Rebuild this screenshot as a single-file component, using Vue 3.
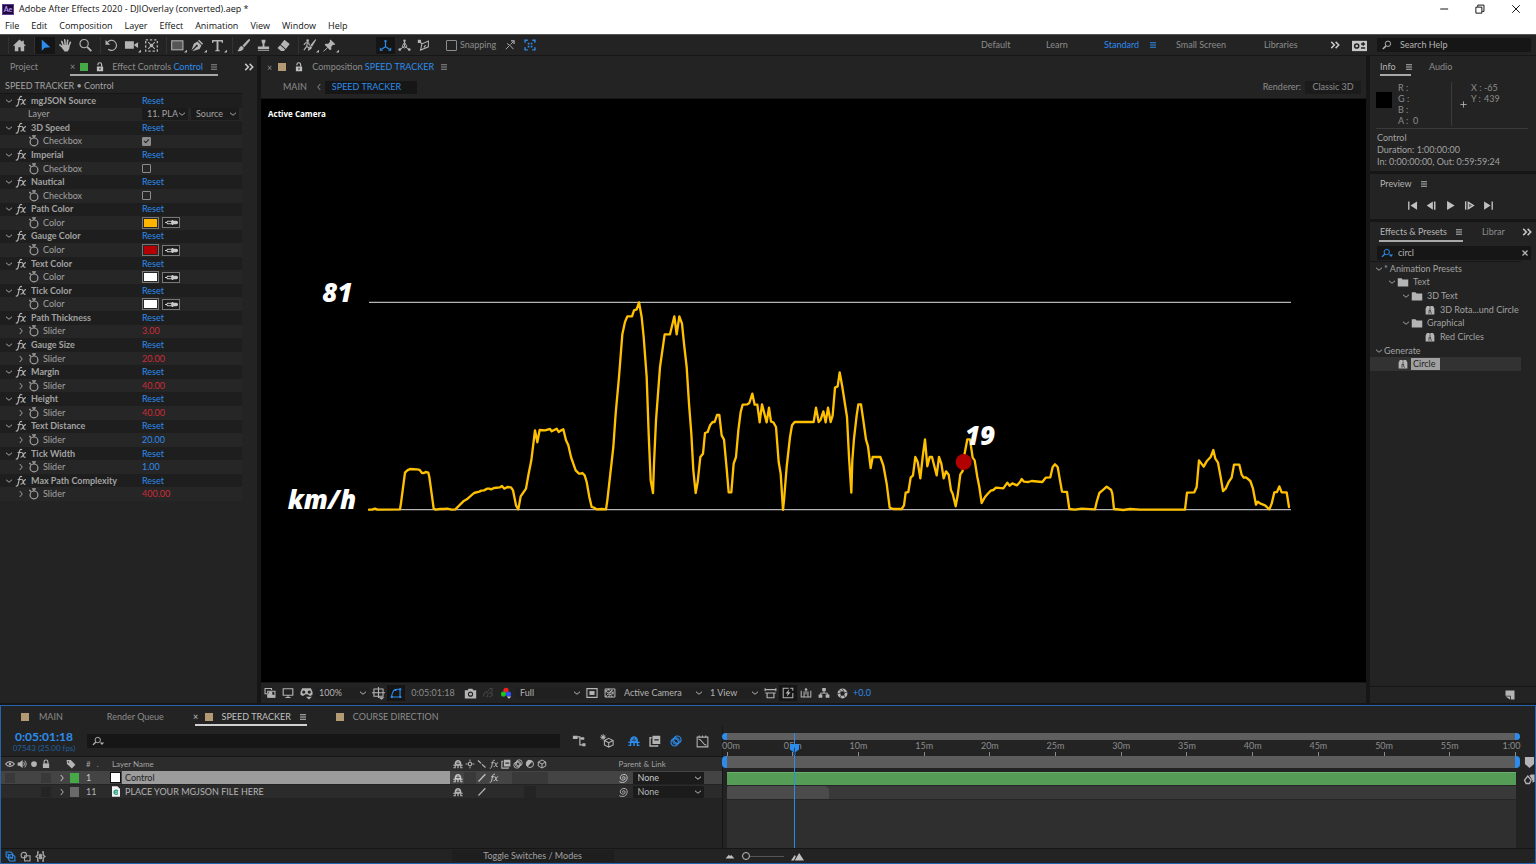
<script setup>
import { ref } from 'vue'

const menus = ['File', 'Edit', 'Composition', 'Layer', 'Effect', 'Animation', 'View', 'Window', 'Help']

const toolGroups = [
  [{ id: 'home', label: 'Home' }],
  [{ id: 'select', label: 'Selection', active: true }, { id: 'hand', label: 'Hand' }, { id: 'zoom', label: 'Zoom' }],
  [{ id: 'rotate', label: 'Rotation' }, { id: 'camera', label: 'Camera', more: true }, { id: 'panbehind', label: 'Pan Behind' }],
  [{ id: 'shape', label: 'Rectangle', more: true }, { id: 'pen', label: 'Pen', more: true }, { id: 'type', label: 'Type', more: true }],
  [{ id: 'brush', label: 'Brush' }, { id: 'stamp', label: 'Clone Stamp' }, { id: 'eraser', label: 'Eraser' }],
  [{ id: 'roto', label: 'Roto Brush', more: true }, { id: 'pin', label: 'Puppet Pin', more: true }],
]

const axisTools = [
  { id: 'axis', label: 'Local Axis', active: true },
  { id: 'axisworld', label: 'World Axis' },
  { id: 'axisview', label: 'View Axis' },
]

const effects = ref([
  { name: 'mgJSON Source', kind: 'layer', label: 'Layer' },
  { name: '3D Speed', kind: 'check', label: 'Checkbox', value: true },
  { name: 'Imperial', kind: 'check', label: 'Checkbox', value: false },
  { name: 'Nautical', kind: 'check', label: 'Checkbox', value: false },
  { name: 'Path Color', kind: 'color', label: 'Color', value: '#ffb400' },
  { name: 'Gauge Color', kind: 'color', label: 'Color', value: '#b40000' },
  { name: 'Text Color', kind: 'color', label: 'Color', value: '#ffffff' },
  { name: 'Tick Color', kind: 'color', label: 'Color', value: '#ffffff' },
  { name: 'Path Thickness', kind: 'slider', label: 'Slider', value: '3.00', expr: true },
  { name: 'Gauge Size', kind: 'slider', label: 'Slider', value: '20.00', expr: true },
  { name: 'Margin', kind: 'slider', label: 'Slider', value: '40.00', expr: true },
  { name: 'Height', kind: 'slider', label: 'Slider', value: '40.00', expr: true },
  { name: 'Text Distance', kind: 'slider', label: 'Slider', value: '20.00' },
  { name: 'Tick Width', kind: 'slider', label: 'Slider', value: '1.00' },
  { name: 'Max Path Complexity', kind: 'slider', label: 'Slider', value: '400.00', expr: true },
])

const presets = [
  { text: '* Animation Presets', depth: 0, open: true },
  { text: 'Text', depth: 1, open: true, icon: 'folder' },
  { text: '3D Text', depth: 2, open: true, icon: 'folder' },
  { text: '3D Rota...und Circle', depth: 3, icon: 'preset' },
  { text: 'Graphical', depth: 2, open: true, icon: 'folder' },
  { text: 'Red Circles', depth: 3, icon: 'preset' },
  { text: 'Generate', depth: 0, open: true },
  { text: 'Circle', depth: 1, icon: 'preset', selected: true },
]

const transport = [
  { id: 'first', label: 'First frame' },
  { id: 'prev', label: 'Previous frame' },
  { id: 'play', label: 'Play' },
  { id: 'next', label: 'Next frame' },
  { id: 'last', label: 'Last frame' },
]

const switchIcons = ['shy', 'sun', 'quality', 'fx', 'blend', 'mblur', 'adjust', 'cube']

const layers = [
  { num: '1', name: 'Control', color: '#46a846', selected: true, cells: ['shy', 'box', 'slash', 'fx', '', 'box', 'box', 'box'], avBoxes: [true, false, false, true] },
  { num: '11', name: 'PLACE YOUR MGJSON FILE HERE', color: '#6a6a6a', selected: false, cells: ['shy', '', 'slash', '', '', '', 'box', ''], avBoxes: [false, false, false, true] },
]

const ticks = ['00m', '05m', '10m', '15m', '20m', '25m', '30m', '35m', '40m', '45m', '50m', '55m', '1:00']

const search = ref('circl')
const helpSearch = ref('')
const layerSearch = ref('')

// Speed samples in canvas units, split at the midpoint of the route.
const early = '297,688 306,688 315,685 322,688 390,687 393,668 405,577 412,570 420,566 440,567 447,568 450,570 456,578 462,578 467,575 475,577 478,590 487,655 491,685 497,688 510,686 522,686 532,685 545,688 556,687 580,663 593,655 612,638 628,634 634,631 642,630 652,625 658,625 663,627 672,623 690,621 696,617 703,625 712,620 723,621 729,630 738,675 745,687 752,648 759,638 768,625 775,585 784,540 795,450 802,486 809,449 825,450 840,446 845,453 860,445 866,455 873,450 880,447 888,480 895,495 903,530 917,570 927,580 932,580 937,578 944,585 950,605 958,650 965,680 972,682 980,687 995,686 1008,687 1012,660 1030,500 1037,400 1047,290 1057,162 1065,125 1072,108 1086,108 1092,90 1100,87 1107,66 1115,110 1121,170 1130,290 1136,460 1142,600 1149,638 1152,550 1158,420 1170,260 1184,162 1200,162 1213,108 1220,162 1228,108 1236,130 1242,190 1250,260 1257,370 1264,460 1270,570 1277,638 1283,605 1291,530 1299,520 1305,458 1313,455 1320,435 1328,425 1334,425 1341,404 1348,404 1355,465 1362,478 1370,565 1376,636 1384,636 1391,550 1398,530 1405,450 1412,395 1418,373 1432,372 1438,368 1447,340 1454,373 1462,373 1469,426 1476,372 1490,426 1497,382 1503,424 1510,426 1518,440 1526,545 1532,580 1539,688'
const late = '9,448 12,420 20,320 30,230 36,195 44,185 101,185 108,142 116,185 122,178 130,153 137,186 144,142 152,185 158,165 165,82 173,78 179,36 187,80 201,170 207,290 214,397 217,300 222,235 230,165 235,132 243,132 250,180 258,238 264,258 272,323 278,290 301,290 310,315 320,370 329,442 340,446 365,446 372,435 377,397 385,395 392,352 399,345 406,290 413,305 421,354 428,290 435,237 442,318 449,290 456,290 470,345 477,290 484,310 491,354 498,333 506,343 513,390 518,400 527,438 533,405 541,342 548,332 553,285 562,237 570,237 578,292 584,300 592,350 598,380 605,428 615,410 622,402 632,391 640,389 648,382 670,384 682,367 689,376 697,369 711,375 720,365 725,356 732,364 745,365 755,362 787,365 797,352 811,351 818,320 825,312 833,320 840,360 846,394 861,395 868,446 885,448 905,445 945,447 950,425 958,398 970,388 980,379 993,388 997,400 1002,446 1030,449 1050,446 1080,448 1215,448 1221,397 1243,396 1250,380 1257,300 1271,319 1280,303 1292,290 1300,269 1306,295 1314,307 1322,350 1329,392 1337,385 1346,365 1355,352 1362,313 1378,313 1385,343 1391,352 1398,351 1411,362 1419,385 1428,433 1433,424 1442,430 1455,435 1468,447 1475,430 1483,396 1491,395 1498,378 1505,396 1520,396 1527,440'
</script>

<template>
  <div class="app">
    <svg class="defs" aria-hidden="true">
      <defs>
        <symbol id="home" viewBox="0 0 16 16"><path fill="currentColor" d="M8 1.5 1 8.2h2V14h3.8V9.8h2.4V14H13V8.2h2L12.6 6V2.8h-1.8v1.5z" /></symbol>
        <symbol id="select" viewBox="0 0 16 16"><path fill="currentColor" d="M4 1.5v12l3.2-3.1 6-.6z" /></symbol>
        <symbol id="hand" viewBox="0 0 16 16"><path fill="none" stroke="currentColor" stroke-width="1.7" stroke-linecap="round" d="M5.6 8 4 3.6M7.6 7.2 7.2 1.8M9.6 7.4l.7-5M11.4 8.6l1.8-4M5 10 2 7.4" /><path fill="currentColor" d="M4.6 7.5h7.8L12 11.6 10.2 14.4H7L4.2 10.6z" /></symbol>
        <symbol id="zoom" viewBox="0 0 16 16"><circle cx="6.5" cy="6" r="4.4" fill="none" stroke="currentColor" stroke-width="1.2" /><path stroke="currentColor" stroke-width="2" d="m9.8 9.4 4.4 4.6" /></symbol>
        <symbol id="rotate" viewBox="0 0 16 16"><path fill="none" stroke="currentColor" stroke-width="1.2" d="M3.6 4.6A5.4 5.4 0 1 1 4.5 12" /><path fill="currentColor" d="M1.6 2.2v5h5z" /></symbol>
        <symbol id="camera" viewBox="0 0 16 16"><path fill="currentColor" d="M1 3.5h9.5v8H1zM11 7l4-2.6v6.2L11 8z" /></symbol>
        <symbol id="panbehind" viewBox="0 0 16 16"><rect x="1.8" y="2" width="12.4" height="12" fill="none" stroke="currentColor" stroke-width="1.4" stroke-dasharray="2.5 2" /><circle cx="8" cy="8" r="1.8" fill="currentColor" /><path stroke="currentColor" stroke-width="1.1" d="m4.5 4.5 7 7m0-7-7 7" /></symbol>
        <symbol id="shape" viewBox="0 0 16 16"><rect x="1.8" y="3" width="12" height="9.6" fill="#555" stroke="currentColor" stroke-width="1.1" /></symbol>
        <symbol id="pen" viewBox="0 0 16 16"><path fill="currentColor" d="M9.8 1.8 14 6l-1.2 1.2-4.2-4.2zM8 3.8l4.2 4.2-2 3.8L2.5 14 7 9.5a1.2 1.2 0 1 0-1-.9L1.6 13 4 6z" /></symbol>
        <symbol id="type" viewBox="0 0 16 16"><path fill="currentColor" d="M2.2 2h11.6v3.4h-1l-.7-1.8H9v9.2l1.6.4v.8H5.4v-.8l1.6-.4V3.6H3.9l-.7 1.8h-1z" /></symbol>
        <symbol id="brush" viewBox="0 0 16 16"><path fill="currentColor" d="M14.8 1 13 1.6 7 8l1.8 1.8 6-7zM6.3 8.4l2 2C7.8 13.2 5 14.6 1.2 13.8c2.2-.8 1.8-5 5.1-5.4z" /></symbol>
        <symbol id="stamp" viewBox="0 0 16 16"><path fill="currentColor" d="M6 1.8h4v2.4L9 6v3h5v2.6H2V9h5V6L6 4.2zM2 12.6h12v1H2z" /></symbol>
        <symbol id="eraser" viewBox="0 0 16 16"><path fill="currentColor" d="m9 1.8 5.6 4.6-4 5.2L5 7zM4.4 7.6l5.4 4.6-1.3 1.6H5.4L1.6 10.6z" /></symbol>
        <symbol id="roto" viewBox="0 0 16 16"><circle cx="6" cy="2.8" r="1.4" fill="currentColor" /><path fill="none" stroke="currentColor" stroke-width="1.2" d="M2 7.2 4 5h3l1 3M5.8 5 5 9l-3 4M5 9l2.4 1.5L7 13.6" /><path fill="currentColor" d="m15.2 1.8-1-.4-5.4 6.2 1.9 1.6zM8.6 8.2l2 1.7c-.4 2.2-2 2.9-4 2.7 1.4-.8.8-3.2 2-4.4z" /></symbol>
        <symbol id="pin" viewBox="0 0 16 16"><path fill="currentColor" d="m9 1.6 5.2 5-1.4.8-1-.2-2 2.2.2 2.6-1.4 1-5.8-5.8 1.2-1.2 2.6.2 2-2.2-.4-1z" /><path stroke="currentColor" d="m6 10.2-4.4 4" /></symbol>
        <symbol id="axis" viewBox="0 0 16 16"><path fill="none" stroke="currentColor" stroke-width="1.5" d="M8 3v6.5M8 9.5 3 12.6M8 9.5l5 3.1" /><circle cx="8" cy="2.6" r="1.5" fill="currentColor" /><path fill="currentColor" d="M1 10.6v4H5zM15 10.6v4H11z" /></symbol>
        <symbol id="axisworld" viewBox="0 0 16 16"><path fill="none" stroke="currentColor" stroke-width="1.2" d="M8 2v7M8 9l-5.6 3.8M8 9l5.6 3.8M5 9.4 8 4l3 5.4-3 1.6z" /><circle cx="8" cy="2" r="1.5" fill="currentColor" /><circle cx="2.2" cy="13" r="1.7" fill="currentColor" /><circle cx="13.8" cy="13" r="1.7" fill="currentColor" /></symbol>
        <symbol id="axisview" viewBox="0 0 16 16"><path fill="none" stroke="currentColor" stroke-width="1.3" d="M3 2.6 6 6l8-3.4v7l-9.6 4L6 6M10.6 7.6l-2.2 2.8" /><path fill="currentColor" d="M1 1h4v4H1z" /></symbol>
        <symbol id="snapline" viewBox="0 0 16 16"><path fill="none" stroke="currentColor" stroke-width="1.2" d="M2.5 13.6 7 9m1.6-1.6 3.8-3.8M4 6l4.6 3 4 4.6" /><path fill="currentColor" d="M9.4 1.8h4.8v4.8h-1.6V3.4H9.4z" /></symbol>
        <symbol id="snapbox" viewBox="0 0 16 16"><path fill="none" stroke="currentColor" stroke-width="1.8" d="M1.4 5V1.6H5M11 1.6h3.6V5M14.6 11v3.4H11M5 14.4H1.4V11" /><path fill="currentColor" d="M5 5h2.2v2.2H5zM9 5h2.2v2.2H9zM5 9h2.2v2.2H5zM9 9h2.2v2.2H9z" /></symbol>
        <symbol id="menu" viewBox="0 0 16 16"><path stroke="currentColor" stroke-width="2" d="M2 3.5h12M2 8h12M2 12.5h12" /></symbol>
        <symbol id="chevrons" viewBox="0 0 16 16"><path fill="none" stroke="currentColor" stroke-width="2.4" d="m2 3 5 5-5 5M9 3l5 5-5 5" /></symbol>
        <symbol id="panels" viewBox="0 0 16 16"><path fill="currentColor" d="M0 3h16v11H0z" /><circle cx="5" cy="8.5" r="2.2" fill="none" stroke="#222" stroke-width="1.6" /><path stroke="#222" stroke-width="1.6" d="M9.6 6.5H14M9.6 10.6H14M12 4.6v3.6" /></symbol>
        <symbol id="search" viewBox="0 0 16 16"><circle cx="9.5" cy="6" r="4.3" fill="none" stroke="currentColor" stroke-width="1.5" /><path stroke="currentColor" stroke-width="2.4" d="m6.4 9.4-5 5" /></symbol>
        <symbol id="searchmenu" viewBox="0 0 20 16"><circle cx="8.8" cy="6.4" r="4.3" fill="none" stroke="currentColor" stroke-width="1.5" /><path stroke="currentColor" stroke-width="2.2" d="m5.8 9.6-4.6 4.6" /><path fill="currentColor" d="M12 10.4h7l-3.5 3.8z" /></symbol>
        <symbol id="plus" viewBox="0 0 16 16"><path stroke="currentColor" stroke-width="2" d="M8 1v14M1 8h14" /></symbol>
        <symbol id="cross" viewBox="0 0 16 16"><path stroke="currentColor" stroke-width="2.6" d="m3 3 10 10M13 3 3 13" /></symbol>
        <symbol id="lock" viewBox="0 0 16 16"><rect x="3" y="7" width="10" height="7.4" fill="currentColor" /><path fill="none" stroke="currentColor" stroke-width="1.8" d="M5 7V4.5a3 3 0 0 1 6 0V7" /></symbol>
        <symbol id="unlock" viewBox="0 0 16 16"><path fill="currentColor" fill-rule="evenodd" d="M3 7h10v7.6H3zM7.2 9v3.4h1.6V9z" /><path fill="none" stroke="currentColor" stroke-width="1.8" d="M4.6 5V4.2a3 3 0 0 1 6 0V7" /></symbol>
        <symbol id="down" viewBox="0 0 16 16"><path fill="none" stroke="currentColor" stroke-width="2" d="m2 5.5 6 5 6-5" /></symbol>
        <symbol id="right" viewBox="0 0 16 16"><path fill="none" stroke="currentColor" stroke-width="2" d="m5.5 2 5 6-5 6" /></symbol>
        <symbol id="left" viewBox="0 0 16 16"><path fill="none" stroke="currentColor" stroke-width="2" d="m10.5 2-5 6 5 6" /></symbol>
        <symbol id="fx" viewBox="0 0 16 16"><path fill="none" stroke="currentColor" stroke-width="1.5" d="M9.4 2.4C7.4 1 6.4 2.4 5.8 5L4 13c-.5 1.8-1.6 2.2-3 1.4M3.4 6h5M8.6 6c2-.4 2 1 2.6 3.6s1 3.2 2.8 2.4M14.6 6.2c-1.6-.4-2.4.8-3.6 3s-2 3.4-3.6 2.8" /></symbol>
        <symbol id="watch" viewBox="0 0 16 16"><circle cx="8" cy="9.2" r="5.2" fill="none" stroke="currentColor" stroke-width="1.6" /><path stroke="currentColor" stroke-width="1.8" d="M5.4 1.2h5.2M8 1.6v2.4M1.8 2.6l2 2" /></symbol>
        <symbol id="dropper" viewBox="0 0 20 12"><path fill="none" stroke="currentColor" stroke-width="1.4" d="M2 6h2l1.4-1.6H11v3.2H5.4L4 6" /><path fill="currentColor" d="M11 2.6h2v1.2h4.2a2.2 2.2 0 0 1 0 4.4H13v1.2h-2z" /></symbol>
        <symbol id="copies" viewBox="0 0 16 16"><path fill="none" stroke="currentColor" stroke-width="1.5" d="M10 4V2H1.4v7H4M5 5.6h9.6v8H5z" /><path fill="currentColor" d="M5 14v-3l2-5h4v4l3.6 1v3z" /></symbol>
        <symbol id="monitor" viewBox="0 0 16 16"><path fill="none" stroke="currentColor" stroke-width="1.5" d="M1.6 2.4h12.8V11H1.6zM8 11v3M4.6 14h6.8" /></symbol>
        <symbol id="goggles" viewBox="0 0 16 16"><path fill="currentColor" fill-rule="evenodd" d="M2.6 1.6h10.8L15.4 6v3.6L12.6 11 8.8 9H7.2l-3.8 2L.6 9.6V6zM4.6 4.2a2 2 0 1 0 0 4 2 2 0 0 0 0-4zm6.8 0a2 2 0 1 0 0 4 2 2 0 0 0 0-4z" /><path fill="currentColor" d="M7.4 12h7.2L11 15.4z" /></symbol>
        <symbol id="grid" viewBox="0 0 16 16"><path fill="none" stroke="currentColor" stroke-width="1.3" d="M2.4 2.4h11.2v9H2.4zM8 0v13.4M0 7h16" /><path fill="currentColor" d="M8 12.6h7.4l-3.7 3.2z" /></symbol>
        <symbol id="maskpath" viewBox="0 0 16 16"><path fill="none" stroke="currentColor" stroke-width="1.5" d="M2.4 13.4V11c1-5 4-8 7-8h4v10.4z" /><path fill="currentColor" d="M1 12h2.6v2.6H1zM12.4 12H15v2.600h-2.600zM12.400 1.600H15v2.600h-2.600zM6 2.600h2.600v2.600H6z" /></symbol>
        <symbol id="snapshot" viewBox="0 0 16 16"><path fill="currentColor" fill-rule="evenodd" d="M1 4h3.4l1.4-2h4.4l1.4 2H15v10H1zM8 5.6a3.2 3.2 0 1 0 0 6.4 3.2 3.2 0 0 0 0-6.4z" /><circle cx="8" cy="8.8" r="1.8" fill="currentColor" /></symbol>
        <symbol id="ghost" viewBox="0 0 16 16"><path fill="none" stroke="#444" stroke-width="1.4" d="M2 12.6c0-5 3-7 5-6s1 6-1.6 7M8 5l3-3h2.6v3l-3 3 3 1v2.6L9.4 13" /></symbol>
        <symbol id="rgb" viewBox="0 0 16 16"><circle cx="8" cy="4.4" r="3.4" fill="#f02020" /><circle cx="4.6" cy="9.4" r="3.4" fill="#20c020" /><circle cx="11.4" cy="9.4" r="3.4" fill="#3050ff" /><path fill="#ccc" d="M9 12.8h6l-3 2.8z" /></symbol>
        <symbol id="roi" viewBox="0 0 16 16"><path fill="none" stroke="currentColor" stroke-width="1.5" d="M1.2 2.2h13.6v11.6H1.2z" /><path fill="currentColor" d="M4.6 5.4h6.8v5.2H4.6z" /></symbol>
        <symbol id="checker" viewBox="0 0 16 16"><path fill="none" stroke="currentColor" stroke-width="1.3" d="M1.4 2.6h13.2v10.8H1.4z" /><path fill="none" stroke="currentColor" stroke-width="1.7" d="m2 7 4-4M2 13 12 3M6 13l8-8M2 4l9 9M6 3l8 8" stroke-dasharray="2.2 1.4" /></symbol>
        <symbol id="aspect" viewBox="0 0 16 16"><path fill="none" stroke="currentColor" stroke-width="1.4" d="M1 3.2h14M3.8 7.4h8.4v5.8H3.8zM1.4 1.4v3.8M14.6 1.4v3.8M3.8 7.4H1.6M12.2 7.4h2.2" /></symbol>
        <symbol id="fast" viewBox="0 0 16 16"><path fill="none" stroke="currentColor" stroke-width="1.4" d="M9 1.6H1.6v12.8h12.8V8M11 1.6h3.4V5" /><path fill="currentColor" d="M9.6 3 4.8 8.6h2.8L6.4 13l5-6H8.6z" /></symbol>
        <symbol id="tlbtn" viewBox="0 0 16 16"><path fill="none" stroke="currentColor" stroke-width="1.4" d="M1.6 5v8.4h12.8V5M5.4 6v7M10.6 6v7M8 2v8" /><path fill="currentColor" d="M5.6 4.4 8 1l2.4 3.4z" /></symbol>
        <symbol id="flow" viewBox="0 0 16 16"><path fill="currentColor" d="M5.6 1.4h4.8v4.2H5.6zM.8 10h5v4.4h-5zM10.2 10h5v4.4h-5z" /><path fill="none" stroke="currentColor" stroke-width="1.3" d="M8 5v3M3.4 10.6V8.2h9.2v2.4" /></symbol>
        <symbol id="aperture" viewBox="0 0 16 16"><circle cx="8" cy="8" r="5.2" fill="none" stroke="currentColor" stroke-width="4" /><path stroke="#222" stroke-width="1" d="m7 .6 3.4 4.8M15 6l-5.4 1.4M12.4 14.6 10 10M4 15l2.6-5M.6 8.6 6 7M3 2.2 6.8 6" /></symbol>
        <symbol id="first" viewBox="0 0 16 16"><path fill="currentColor" d="M1.6 2h2v12h-2zM14.6 2v12L5 8z" /></symbol>
        <symbol id="prev" viewBox="0 0 16 16"><path fill="currentColor" d="M10 2v12L1 8zM11.6 2h2.2v12h-2.2z" /></symbol>
        <symbol id="play" viewBox="0 0 16 16"><path fill="currentColor" d="m3 1.6 11 6.4-11 6.4z" /></symbol>
        <symbol id="next" viewBox="0 0 16 16"><path fill="currentColor" d="M1.4 2h2v12h-2z" /><path fill="#666" stroke="currentColor" stroke-width="2" d="m6.2 3.4 7.4 4.6-7.4 4.6z" /></symbol>
        <symbol id="last" viewBox="0 0 16 16"><path fill="currentColor" d="M1.6 2v12L11 8zM12.4 2h2v12h-2z" /></symbol>
        <symbol id="folder" viewBox="0 0 16 12"><path fill="currentColor" d="M1 1h5l1.4 1.6H15V12H1z" /></symbol>
        <symbol id="preset" viewBox="0 0 16 16"><path fill="currentColor" d="M1 5.4 3 1.6h4L8 4l1-2.4h4L15 5.4V15H1z" /><path fill="none" stroke="#333" stroke-width="1.3" d="M8 4.4v3M6.4 14V8.6h3.2M10.4 14l-2-5" /></symbol>
        <symbol id="newitem" viewBox="0 0 16 16"><path fill="currentColor" d="M2 2h12v12H9V9H2z" /><path fill="currentColor" d="M2 10h6v4z" /></symbol>
        <symbol id="eye" viewBox="0 0 16 16"><path fill="none" stroke="currentColor" stroke-width="1.8" d="M1 8c3.6-5 10.4-5 14 0-3.6 5-10.4 5-14 0z" /><circle cx="8" cy="8" r="2" fill="currentColor" /></symbol>
        <symbol id="speaker" viewBox="0 0 16 16"><path fill="currentColor" d="M1 5.4h3L9 1.6v12.8L4 10.6H1z" /><path fill="none" stroke="currentColor" stroke-width="1.5" d="M10.6 5c1.6 2 1.6 4 0 6M12.4 2.6c3 3.6 3 7.2 0 10.8" /></symbol>
        <symbol id="solo" viewBox="0 0 16 16"><circle cx="8" cy="8" r="4.6" fill="currentColor" /></symbol>
        <symbol id="tag" viewBox="0 0 16 16"><path fill="currentColor" fill-rule="evenodd" d="M1 1.6h6.6L15 9l-5.6 6L1.6 8zM4 3.6a1.2 1.2 0 1 0 0 2.4 1.2 1.2 0 0 0 0-2.4z" /></symbol>
        <symbol id="shy" viewBox="0 0 16 16"><path fill="currentColor" d="M2.6 8c0-8.4 10.8-8.4 10.8 0v1h2.2v1.6h-2.2V13h2v1.6h-3.8v-4H9v4H7v-4H4.4v4H.6V13h2v-2.4H.4V9h2.2z" /><path stroke="#333" stroke-width="1.1" d="M8 3.4v5M5 7h6" /></symbol>
        <symbol id="sun" viewBox="0 0 16 16"><circle cx="8" cy="8" r="2.8" fill="none" stroke="currentColor" stroke-width="1.7" /><path stroke="currentColor" stroke-width="1.6" d="M8 1v3M8 12v3M1 8h3M12 8h3" /></symbol>
        <symbol id="quality" viewBox="0 0 16 16"><path stroke="currentColor" stroke-width="2" d="m1.6 2.4 5 4.6M8 8.6l5.6 5" /></symbol>
        <symbol id="slash" viewBox="0 0 16 16"><path stroke="currentColor" stroke-width="1.8" d="m2.4 13.6 11-11.6" /></symbol>
        <symbol id="blend" viewBox="0 0 16 16"><path fill="currentColor" fill-rule="evenodd" d="M4.6 1H15v11H4.6zM7 5.6v1.8h6V5.6z" /><path fill="none" stroke="currentColor" stroke-width="1.8" d="M3.6 3.6H1.4v11h10v-1.4" /></symbol>
        <symbol id="mblur" viewBox="0 0 16 16"><circle cx="9.8" cy="6.2" r="4.9" fill="none" stroke="currentColor" stroke-width="1.5" /><circle cx="6.2" cy="9.8" r="4.9" fill="none" stroke="currentColor" stroke-width="1.5" /><circle cx="8" cy="8" r="4.4" fill="none" stroke="currentColor" stroke-width="1.3" /></symbol>
        <symbol id="adjust" viewBox="0 0 16 16"><circle cx="8" cy="8" r="5.6" fill="none" stroke="currentColor" stroke-width="1.6" /><path fill="currentColor" d="M12.2 3.8A6 6 0 1 0 3.8 12.2z" /></symbol>
        <symbol id="cube" viewBox="0 0 16 16"><path fill="none" stroke="currentColor" stroke-width="1.6" d="m8 1.6 6 3.2v6.4L8 14.4l-6-3.2V4.8zM2 4.8 8 8l6-3.2M8 8v6.4" /></symbol>
        <symbol id="spiral" viewBox="0 0 16 16"><path fill="none" stroke="currentColor" stroke-width="1.5" d="M8.6 8.4c-1 .8-2-.4-1.4-1.6 1-1.8 4-1.2 4.2 1.2.2 3-3.4 4.4-5.8 3S3 6 5 4s6.4-2.4 8.4-.4 1.6 7-1 9.6-7.4 2.4-10.4.6" /></symbol>
        <symbol id="miniflow" viewBox="0 0 16 16"><path fill="currentColor" d="M1 2h5.4v3.6H1zM10 3.6h4v3h-4zM11.8 10.6h3.6V14h-3.6z" /><path fill="none" stroke="currentColor" stroke-width="1.4" d="M6 3.4h3v1.7h2M9 5v7.4h3.2" /></symbol>
        <symbol id="draft3d" viewBox="0 0 16 16"><path fill="none" stroke="currentColor" stroke-width="1.2" d="m10 5 5 2.4v5L10 15l-5-2.6v-5zM5 7.4 10 10l5-2.6M10 10v5" /><circle cx="3.6" cy="3.6" r="1.8" fill="currentColor" /><path stroke="currentColor" stroke-width=".9" d="M3.6 0v7.2M0 3.6h7.2M1 1l5.2 5.2M6.2 1 1 6.2" /></symbol>
        <symbol id="graph" viewBox="0 0 16 16"><path fill="none" stroke="currentColor" stroke-width="1.3" d="M1.4 2.6h13.2v12H1.4zM3 5c5 0 4 7 10 7.6M4 .6v2M8 .6v2M12 .6v2" /></symbol>
        <symbol id="jsonfile" viewBox="0 0 12 16"><path fill="#f2f2f2" d="M0 0h8l4 4v12H0z" /><path fill="none" stroke="#22a07c" stroke-width="1.8" d="M9 7.4C6.6 5 3 6.2 3 9s3.4 4.4 6 2M3.4 9H9" /></symbol>
        <symbol id="togglea" viewBox="0 0 16 16"><path fill="none" stroke="currentColor" stroke-width="1.5" d="M1.6 1.6h7L11 4v6H4l-2.4-2.4zM5 5.6h6.6L14.4 8v6.4H7L5 12z" /><path fill="none" stroke="currentColor" stroke-width="1.3" d="m3 3.6 8 8" /></symbol>
        <symbol id="toggleb" viewBox="0 0 16 16"><circle cx="5.6" cy="6" r="4" fill="none" stroke="currentColor" stroke-width="1.6" /><rect x="6.6" y="7" width="8" height="7.4" fill="none" stroke="currentColor" stroke-width="1.6" /></symbol>
        <symbol id="togglec" viewBox="0 0 16 16"><path fill="none" stroke="currentColor" stroke-width="2" d="M5.6 1.4H4V6L1.6 8 4 10v4.6h1.6M10.4 1.4H12V6l2.4 2-2.4 2v4.6h-1.6" /><path fill="currentColor" d="M5.6 5.6 7 4h2l1.4 1.6v5L9 12H7l-1.4-1.4z" /></symbol>
        <symbol id="hill" viewBox="0 0 16 16"><path fill="currentColor" d="m1 12 5-6 2 2 2-1.6L15 12z" /></symbol>
        <symbol id="hills" viewBox="0 0 16 16"><path fill="currentColor" d="m0 13 4.6-7L6 7.6 3.6 13zM4.6 13 10 3.6 16 13z" /></symbol>
        <symbol id="marker" viewBox="0 0 12 14"><path fill="currentColor" d="M1 1h10v7.6L6 13 1 8.6z" /></symbol>
        <symbol id="compbtn" viewBox="0 0 16 16"><path fill="none" stroke="currentColor" stroke-width="1.8" d="M2 9.600 6.400 4l4.400 5.600L8.600 14H4.200z" /><path fill="currentColor" d="M8.600 3.400 11 2h4.400v9.600L12.600 13V9.600z" /></symbol>
        <symbol id="minimize" viewBox="0 0 16 16"><path stroke="#111" stroke-width="1.3" d="M3 8h10.5" /></symbol>
        <symbol id="restore" viewBox="0 0 16 16"><path fill="none" stroke="#111" stroke-width="1.3" d="M2.5 5.5h8v8h-8zM5 5V2.8h8.3v8.4H11" /></symbol>
        <symbol id="close" viewBox="0 0 16 16"><path stroke="#111" stroke-width="1.3" d="m3 3 10 10M13 3 3 13" /></symbol>
      </defs>
    </svg>

    <header class="titlebar">
      <span class="logo">Ae</span>
      <span class="title">Adobe After Effects 2020 - DJIOverlay (converted).aep *</span>
      <div class="winbtns">
        <button v-for="b in ['minimize', 'restore', 'close']" :key="b" :aria-label="b"><svg class="i12"><use :href="'#' + b" /></svg></button>
      </div>
    </header>

    <nav class="menubar">
      <button v-for="m in menus" :key="m">{{ m }}</button>
    </nav>

    <div class="toolbar">
      <div v-for="(g, gi) in toolGroups" :key="gi" class="toolgroup">
        <button v-for="t in g" :key="t.id" class="tool" :class="{ active: t.active, more: t.more }" :aria-label="t.label">
          <svg class="i15"><use :href="'#' + t.id" /></svg>
        </button>
      </div>
      <div class="toolgroup axes">
        <button v-for="t in axisTools" :key="t.id" class="tool" :class="{ active: t.active }" :aria-label="t.label">
          <svg class="i13"><use :href="'#' + t.id" /></svg>
        </button>
      </div>
      <label class="snapping"><input type="checkbox" class="check big" />Snapping</label>
      <button class="tool" aria-label="Snap edges"><svg class="i12"><use href="#snapline" /></svg></button>
      <button class="tool blue" aria-label="Snap bounds"><svg class="i12"><use href="#snapbox" /></svg></button>
      <div class="workspaces">
        <button class="ws1">Default</button>
        <button class="ws2">Learn</button>
        <button class="ws3 on">Standard<svg class="i8"><use href="#menu" /></svg></button>
        <button class="ws4">Small Screen</button>
        <button class="ws5">Libraries</button>
        <button class="more-ws" aria-label="More workspaces"><svg class="i10"><use href="#chevrons" /></svg></button>
        <button class="panels" aria-label="Panels"><svg class="i15"><use href="#panels" /></svg></button>
        <label class="helpbox"><svg class="i10"><use href="#search" /></svg><input v-model="helpSearch" type="text" placeholder="Search Help" aria-label="Search Help" /></label>
      </div>
    </div>

    <main class="workspace">
      <section class="panel controls">
        <div class="tabs">
          <button class="tab project">Project</button>
          <div class="tab current">
            <button class="x" aria-label="Close tab">×</button>
            <i class="chip green"></i>
            <svg class="i10"><use href="#unlock" /></svg>
            <span>Effect Controls <b>Control</b></span>
            <svg class="i8"><use href="#menu" /></svg>
          </div>
          <button class="end" aria-label="More tabs"><svg class="i10"><use href="#chevrons" /></svg></button>
        </div>
        <div class="path">SPEED TRACKER • Control</div>
        <div class="fxlist">
          <template v-for="(e, i) in effects" :key="e.name">
            <div class="fxrow head">
              <svg class="i8"><use href="#down" /></svg>
              <svg class="i12 fxi"><use href="#fx" /></svg>
              <span class="fxname">{{ e.name }}</span>
              <button class="value blue">Reset</button>
            </div>
            <div class="fxrow prop" :class="'is-' + e.kind">
              <svg v-if="e.kind === 'slider'" class="i8 tw"><use href="#right" /></svg>
              <svg v-if="e.kind !== 'layer'" class="i12 watch"><use href="#watch" /></svg>
              <label class="fxname" :for="'fx' + i">{{ e.label }}</label>
              <div class="value">
                <template v-if="e.kind === 'layer'">
                  <span class="dd w1"><select :id="'fx' + i"><option>11. PLACE YOUR MGJSON FILE HERE</option></select><svg class="i8"><use href="#down" /></svg></span>
                  <span class="dd w2"><select aria-label="Layer source"><option>Source</option></select><svg class="i8"><use href="#down" /></svg></span>
                </template>
                <input v-else-if="e.kind === 'check'" :id="'fx' + i" v-model="e.value" type="checkbox" class="check" />
                <template v-else-if="e.kind === 'color'">
                  <input :id="'fx' + i" v-model="e.value" type="color" class="swatch" />
                  <button class="dropper" aria-label="Pick color"><svg><use href="#dropper" /></svg></button>
                </template>
                <input v-else :id="'fx' + i" v-model="e.value" type="text" class="num" :class="{ expr: e.expr }" />
              </div>
            </div>
          </template>
        </div>
      </section>

      <section class="panel comp">
        <div class="tabs">
          <div class="tab">
            <button class="x" aria-label="Close tab">×</button>
            <i class="chip tan"></i>
            <svg class="i10"><use href="#unlock" /></svg>
            <span>Composition <b>SPEED TRACKER</b></span>
            <svg class="i8"><use href="#menu" /></svg>
          </div>
        </div>
        <div class="crumbs">
          <button class="crumb">MAIN</button>
          <svg class="i8"><use href="#left" /></svg>
          <button class="crumb here">SPEED TRACKER</button>
          <span class="renderer">Renderer:</span>
          <button class="classic">Classic 3D</button>
        </div>
        <div class="viewer">
          <svg class="canvas" viewBox="0 0 3315 1749" preserveAspectRatio="xMidYMid meet">
            <text class="camlabel" x="21" y="54">Active Camera</text>
            <path d="M324 610H3090M324 1232H3090" stroke="#b4b4b4" stroke-width="4" />
            <polyline class="speed" transform="translate(27 544)" :points="early" />
            <polyline class="speed" transform="translate(1557 784)" :points="late" />
            <circle cx="2108" cy="1089" r="24" fill="#b00000" />
            <text class="big" x="184" y="610">81</text>
            <text class="big" x="80" y="1231">km/h</text>
            <text class="big" x="2112" y="1039">19</text>
          </svg>
        </div>
        <div class="viewbar">
          <button aria-label="Always preview"><svg class="i12"><use href="#copies" /></svg></button>
          <button aria-label="Primary viewer"><svg class="i12"><use href="#monitor" /></svg></button>
          <button aria-label="VR"><svg class="i13"><use href="#goggles" /></svg></button>
          <span class="dd z1"><select aria-label="Magnification"><option>100%</option></select><svg class="i8"><use href="#down" /></svg></span>
          <button aria-label="Grid"><svg class="i13"><use href="#grid" /></svg></button>
          <button class="on" aria-label="Mask visibility"><svg class="i12"><use href="#maskpath" /></svg></button>
          <button class="vtime">0:05:01:18</button>
          <button aria-label="Snapshot"><svg class="i13"><use href="#snapshot" /></svg></button>
          <button aria-label="Show snapshot"><svg class="i12"><use href="#ghost" /></svg></button>
          <button aria-label="Channels"><svg class="i12"><use href="#rgb" /></svg></button>
          <span class="dd z2"><select aria-label="Resolution"><option>Full</option></select><svg class="i8"><use href="#down" /></svg></span>
          <button aria-label="Region of interest"><svg class="i12"><use href="#roi" /></svg></button>
          <button aria-label="Transparency grid"><svg class="i12"><use href="#checker" /></svg></button>
          <span class="dd z3"><select aria-label="3D view"><option>Active Camera</option></select><svg class="i8"><use href="#down" /></svg></span>
          <span class="dd z4"><select aria-label="View layout"><option>1 View</option></select><svg class="i8"><use href="#down" /></svg></span>
          <button aria-label="Pixel aspect"><svg class="i13"><use href="#aspect" /></svg></button>
          <button class="dark" aria-label="Fast previews"><svg class="i12"><use href="#fast" /></svg></button>
          <button aria-label="Timeline"><svg class="i12"><use href="#tlbtn" /></svg></button>
          <button aria-label="Flowchart"><svg class="i12"><use href="#flow" /></svg></button>
          <button aria-label="Exposure"><svg class="i11"><use href="#aperture" /></svg></button>
          <button class="exposure">+0.0</button>
        </div>
      </section>

      <aside class="side">
        <section class="panel info">
          <div class="tabs">
            <div class="tab current"><span>Info</span><svg class="i8"><use href="#menu" /></svg></div>
            <button class="tab audio">Audio</button>
          </div>
          <div class="readout">
            <i class="black"></i>
            <dl class="rgba"><dt>R :</dt><dd></dd><dt>G :</dt><dd></dd><dt>B :</dt><dd></dd><dt>A :</dt><dd>0</dd></dl>
            <svg class="plus"><use href="#plus" /></svg>
            <dl class="xy"><dt>X :</dt><dd>-65</dd><dt>Y :</dt><dd>439</dd></dl>
          </div>
          <div class="details">
            <p>Control</p>
            <p>Duration: 1:00:00:00</p>
            <p>In: 0:00:00:00, Out: 0:59:59:24</p>
          </div>
        </section>
        <section class="panel preview">
          <div class="ptitle">Preview<svg class="i8"><use href="#menu" /></svg></div>
          <div class="transport">
            <button v-for="t in transport" :key="t.id" :aria-label="t.label"><svg class="i11"><use :href="'#' + t.id" /></svg></button>
          </div>
        </section>
        <section class="panel presets">
          <div class="tabs">
            <div class="tab current"><span>Effects &amp; Presets</span><svg class="i8"><use href="#menu" /></svg></div>
            <button class="tab libs">Librar</button>
            <button class="end" aria-label="More tabs"><svg class="i10"><use href="#chevrons" /></svg></button>
          </div>
          <div class="presetsearch">
            <svg class="sm"><use href="#searchmenu" /></svg>
            <input v-model="search" type="text" aria-label="Search presets" />
            <button aria-label="Clear"><svg class="i8"><use href="#cross" /></svg></button>
          </div>
          <ul class="tree">
            <li v-for="p in presets" :key="p.text" :class="['d' + p.depth, { selected: p.selected }]">
              <svg class="i8" :class="{ hid: !p.open }"><use href="#down" /></svg>
              <svg v-if="p.icon" class="ti"><use :href="'#' + p.icon" /></svg>
              <span>{{ p.text }}</span>
            </li>
          </ul>
          <div class="sidefoot"><button aria-label="New preset"><svg class="i12"><use href="#newitem" /></svg></button></div>
        </section>
      </aside>
    </main>

    <section class="timeline">
      <div class="tltabs">
        <button class="tltab t1"><i class="chip tan"></i>MAIN</button>
        <button class="tltab t2">Render Queue</button>
        <div class="tltab t3"><button class="x" aria-label="Close tab">×</button><i class="chip tan"></i><span>SPEED TRACKER</span><svg class="i8"><use href="#menu" /></svg></div>
        <button class="tltab t4"><i class="chip tan"></i>COURSE DIRECTION</button>
      </div>
      <div class="tlbody">
        <div class="tlleft">
          <div class="tltop">
            <div class="clock"><b>0:05:01:18</b><span>07543 (25.00 fps)</span></div>
            <label class="layersearch"><svg class="sm"><use href="#searchmenu" /></svg><input v-model="layerSearch" type="text" aria-label="Search layers" /></label>
            <div class="tlicons">
              <button aria-label="Mini flowchart"><svg class="i14"><use href="#miniflow" /></svg></button>
              <button class="apart" aria-label="Draft 3D"><svg class="i14"><use href="#draft3d" /></svg></button>
              <button class="apart blue" aria-label="Shy layers"><svg class="i12"><use href="#shy" /></svg></button>
              <button aria-label="Frame blending"><svg class="i12"><use href="#blend" /></svg></button>
              <button class="blue" aria-label="Motion blur"><svg class="i12"><use href="#mblur" /></svg></button>
              <button class="apart" aria-label="Graph editor"><svg class="i13"><use href="#graph" /></svg></button>
            </div>
          </div>
          <div class="lrow lhead">
            <div class="av">
              <svg v-for="a in ['eye', 'speaker', 'solo', 'lock']" :key="a" class="i10"><use :href="'#' + a" /></svg>
            </div>
            <div class="tagcol"><svg class="i10"><use href="#tag" /></svg></div>
            <div class="numcol"># &nbsp; .</div>
            <div class="namecol">Layer Name</div>
            <div class="switches"><span v-for="s in switchIcons" :key="s"><svg class="i10"><use :href="'#' + s" /></svg></span></div>
            <div class="parent">Parent &amp; Link</div>
          </div>
          <div v-for="l in layers" :key="l.num" class="lrow layer" :class="{ selected: l.selected }">
            <div class="av"><i v-for="(b, bi) in l.avBoxes" :key="bi" :class="{ box: b }"></i></div>
            <div class="tagcol"><svg class="i8"><use href="#right" /></svg><i class="lchip" :style="{ background: l.color }"></i></div>
            <div class="numcol">{{ l.num }}</div>
            <div class="namecol">
              <i v-if="l.selected" class="null"></i>
              <svg v-else class="file"><use href="#jsonfile" /></svg>
              <span>{{ l.name }}</span>
            </div>
            <div class="switches">
              <span v-for="(c, ci) in l.cells" :key="ci" :class="{ box: c === 'box' }"><svg v-if="c && c !== 'box'" class="i10"><use :href="'#' + c" /></svg></span>
            </div>
            <div class="parent">
              <svg class="i10"><use href="#spiral" /></svg>
              <span class="dd"><select :aria-label="'Parent of ' + l.name"><option>None</option></select><svg class="i8"><use href="#down" /></svg></span>
            </div>
          </div>
        </div>
        <div class="tlright">
          <div class="tracks">
            <div class="navbar"></div>
            <ol class="ruler"><li v-for="t in ticks" :key="t"><span>{{ t }}</span></li></ol>
            <div class="workarea"></div>
            <div class="track one"><div class="clip"></div></div>
            <div class="track two"><div class="clip"></div></div>
            <div class="empty"></div>
            <div class="playhead"><svg viewBox="0 0 10 12"><path fill="#2d8ceb" d="M0 0h10v6L6 9v3H4V9L0 6z" /><path fill="#154a80" d="M4.400 4h1.200v8H4.400z" /></svg></div>
          </div>
          <div class="edge">
            <svg class="mk"><use href="#marker" /></svg>
            <svg class="i12"><use href="#compbtn" /></svg>
          </div>
        </div>
      </div>
      <footer class="tlfoot">
        <div class="footleft">
          <button class="blue" aria-label="Layer switches pane"><svg class="i11"><use href="#togglea" /></svg></button>
          <button aria-label="Transfer controls pane"><svg class="i11"><use href="#toggleb" /></svg></button>
          <button aria-label="In out pane"><svg class="i11"><use href="#togglec" /></svg></button>
          <button class="toggle">Toggle Switches / Modes</button>
        </div>
        <div class="footright">
          <svg class="i10"><use href="#hill" /></svg>
          <input type="range" min="0" max="100" value="0" aria-label="Timeline zoom" />
          <svg class="i13"><use href="#hills" /></svg>
        </div>
      </footer>
    </section>
  </div>
</template>

<style>
body { background: #161616; }
</style>

<style scoped>
* { box-sizing: border-box; }
.app { min-height: 100vh; display: flex; flex-direction: column; background: #161616; color: #a2a2a2; font: 9px/12px Lato, "Open Sans", sans-serif; overflow: hidden; }
.defs { display: block; width: 0; height: 0; }
button, input, select { font: inherit; color: inherit; background: none; border: 0; padding: 0; margin: 0; outline: none; appearance: none; min-width: 0; }
button { display: flex; align-items: center; justify-content: center; white-space: nowrap; }
svg { flex: none; display: block; }
p, ul, ol, dl, dd { margin: 0; padding: 0; list-style: none; }
.i8 { width: 8px; height: 8px; }
.i10 { width: 10px; height: 10px; }
.i11 { width: 11px; height: 11px; }
.i12 { width: 12px; height: 12px; }
.i13 { width: 13px; height: 13px; }
.i14 { width: 14px; height: 14px; }
.i15 { width: 15px; height: 15px; }
.blue { color: #2d8ceb; }
.chip { width: 8px; height: 8px; flex: none; }
.green { background: #46a846; }
.tan { background: #b39a74; }
.x { font-size: 9px; line-height: 9px; }

.titlebar { height: 18px; background: #fff; color: #111; display: flex; align-items: center; padding-left: 2px; gap: 5px; font: 9px/12px "Open Sans", sans-serif; }
.logo { width: 12px; height: 11px; background: #1f0740; border: 1px solid #5c3d8c; color: #b49ae8; font: bold 7px/8px Lato, sans-serif; text-align: center; }
.winbtns { margin-left: auto; display: flex; padding-right: 2px; }
.winbtns button { width: 36px; height: 16px; }
.menubar { height: 16px; background: #fff; color: #111; display: flex; align-items: center; gap: 12px; padding-left: 5px; font: 9px/12px "Open Sans", sans-serif; }

.toolbar { height: 22px; background: #232323; border-top: 1px solid #555; border-bottom: 1px solid #161616; display: flex; align-items: center; padding-left: 8px; color: #b4b4b4; }
.toolgroup { display: flex; margin-right: 5px; border-left: 1px solid #323232; }
.tool { width: 20px; height: 17px; position: relative; }
.tool.active { background: #151515; color: #2d8ceb; }
.tool.more::after { content: ""; position: absolute; right: 0; bottom: 1px; width: 3px; height: 3px; background: currentColor; clip-path: polygon(100% 0, 100% 100%, 0 100%); }
.axes { margin-left: 32px; border: 0; }
.axes .tool { width: 19px; }
.snapping { display: flex; align-items: center; gap: 3px; margin: 0 4px 0 8px; color: #8c8c8c; }
.check { width: 9px; height: 9px; border: 1px solid #8c8c8c; border-radius: 1px; display: block; }
.check.big { width: 11px; height: 11px; }
.check:checked { background: #8c8c8c; position: relative; }
.check:checked::after { content: ""; position: absolute; left: 2px; top: 0; width: 2px; height: 4px; border: solid #222; border-width: 0 1px 1px 0; transform: rotate(45deg); }
.workspaces { margin-left: auto; display: flex; align-items: center; color: #8c8c8c; padding-right: 5px; height: 100%; }
.workspaces > button { justify-content: flex-start; }
.ws1 { width: 65px; } .ws2 { width: 58px; } .ws3 { width: 72px; gap: 10px; } .ws4 { width: 88px; } .ws5 { width: 66px; }
.ws3.on { color: #2d8ceb; }
.more-ws { width: 22px; color: #c8c8c8; }
.panels { width: 25px; color: #c8c8c8; }
.helpbox { width: 154px; height: 14px; background: #161616; display: flex; align-items: center; gap: 8px; padding-left: 5px; color: #b4b4b4; }
.helpbox input::placeholder { color: #b4b4b4; opacity: 1; }

.workspace { flex: 1; min-height: 0; display: grid; grid-template-columns: 257px minmax(0, 1fr) 166px; gap: 0 4px; padding-bottom: 2px; }
.panel { background: #232323; min-width: 0; }
.tabs { display: flex; height: 20px; color: #8c8c8c; }
.tab { display: flex; align-items: center; height: 20px; padding-top: 2px; white-space: nowrap; }
.tab.current { border-bottom: 2px solid #a8a8a8; color: #b4b4b4; padding-top: 3px; }
.tab b { font-weight: 400; color: #2d8ceb; }
.end { margin-left: auto; color: #c8c8c8; padding-top: 2px; }
.project { width: 60px; margin-left: 10px; justify-content: flex-start; }
.controls .current { gap: 5px; width: 148px; color: #8c8c8c; }
.controls .current .i8 { margin-left: auto; }
.controls .end { padding-right: 3px; }
.controls .current .i10, .comp .tab .i10 { margin: 0 2px; color: #c0c0c0; }
.path { height: 17px; padding: 4px 5px 0; }
.fxlist { height: 408px; display: grid; grid-auto-rows: 1fr; width: 242px; border-top: 1px solid #161616; }
.fxrow { display: flex; align-items: center; min-width: 0; padding-left: 5px; }
.fxrow.head { background: #1e1e1e; }
.fxrow.prop { background: #262626; }
.fxi { margin: 0 4px 0 2px; color: #b4b4b4; }
.head .fxname { flex: 1; font-weight: 700; color: #a2a2a2; }
.value { width: 100px; flex: none; justify-content: flex-start; display: flex; align-items: center; gap: 3px; }
.prop .fxname { flex: 1; }
.is-layer, .is-check, .is-color { padding-left: 28px; }
.is-slider { padding-left: 17px; }
.tw { margin-right: 3px; }
.watch { margin-right: 3px; }
.dd { position: relative; display: flex; align-items: center; background: #1b1b1b; height: 12px; }
.dd select { width: 100%; padding: 0 10px 0 5px; height: 12px; line-height: 12px; overflow: hidden; text-overflow: clip; }
.dd svg { position: absolute; right: 2px; top: 2px; pointer-events: none; }
.w1 { width: 46px; }
.w2 { width: 48px; }
.swatch { width: 17px; height: 12px; border: 1px solid #777; }
.swatch::-webkit-color-swatch-wrapper { padding: 1px; }
.swatch::-webkit-color-swatch { border: 0; }
.dropper { width: 18px; height: 11px; border: 1px solid #777; color: #c8c8c8; background: #1b1b1b; }
.dropper svg { width: 16px; height: 9px; }
.num { width: 60px; color: #2d8ceb; height: 12px; }
.num.expr { color: #cc2c38; }

.comp { display: flex; flex-direction: column; }
.comp .tab { gap: 6px; padding-left: 6px; }
.crumbs { height: 22px; display: flex; align-items: center; color: #8c8c8c; }
.crumb { margin: 0 8px 0 22px; }
.crumb.here { margin: 0 0 0 2px; width: 92px; height: 13px; background: #161616; color: #2d8ceb; justify-content: flex-start; padding-left: 7px; }
.renderer { margin-left: auto; }
.classic { width: 56px; height: 13px; background: #1b1b1b; margin: 0 5px 0 4px; }
.viewer { flex: 1; min-height: 0; background: #000; border-top: 1px solid #161616; }
.canvas { width: 100%; height: 100%; }
.speed { fill: none; stroke: #ffc000; stroke-width: 7; stroke-linejoin: round; stroke-linecap: round; }
.camlabel { font: 700 24px "Open Sans", sans-serif; fill: #fff; }
.big { font: italic 800 78px "Open Sans", sans-serif; fill: #fff; }
.viewbar { height: 21px; display: flex; align-items: center; border-top: 1px solid #161616; color: #b4b4b4; }
.viewbar > button { width: 18px; height: 16px; }
.viewbar > button.on { background: #151515; color: #2d8ceb; }
.viewbar > button.dark { background: #151515; }
.viewbar > button.vtime { width: 56px; color: #8c8c8c; }
.viewbar > button.exposure { width: 22px; color: #2d8ceb; }
.viewbar .dd { background: #202020; }
.z1 { width: 54px; } .z2 { width: 68px; } .z3 { width: 86px; } .z4 { width: 56px; }
.z1 select { padding-left: 4px; }

.side { display: flex; flex-direction: column; gap: 3px; min-width: 0; }
.info { height: 115px; }
.info .current { margin-left: 10px; gap: 9px; width: 31px; }
.info .audio { margin-left: 18px; }
.readout { height: 53px; margin: 0 8px 0 6px; border-bottom: 1px solid #3a3a3a; display: flex; padding-top: 6px; color: #8c8c8c; line-height: 11px; }
.black { width: 16px; height: 16px; background: #000; margin-top: 10px; }
.rgba { display: grid; grid-template-columns: 15px 1fr; grid-auto-rows: 11px; margin-left: 6px; width: 54px; border-right: 1px solid #3a3a3a; height: 44px; }
.plus { margin: 19px 4px 0 8px; width: 7px; height: 7px; color: #b4b4b4; }
.xy { display: grid; grid-template-columns: 13px 1fr; grid-auto-rows: 11px; height: 22px; }
.details { padding: 3px 7px; line-height: 12px; }
.preview { height: 45px; padding: 4px 10px 0; }
.ptitle { display: flex; align-items: center; gap: 8px; color: #b4b4b4; }
.transport { display: flex; gap: 8px; padding: 10px 0 0 27px; color: #c0c0c0; }
.transport button { height: 10px; width: 11px; }
.presets { flex: 1; display: flex; flex-direction: column; }
.presets .current { margin-left: 9px; gap: 8px; padding-left: 1px; padding-top: 2px; }
.presets .libs { margin-left: 19px; }
.presets .tab.libs { padding-top: 0; }
.presets .end { padding-right: 4px; padding-top: 0; }
.presetsearch { height: 14px; margin: 4px 5px 1px 7px; background: #161616; display: flex; align-items: center; color: #b4b4b4; gap: 4px; padding-left: 4px; }
.sm { width: 13px; height: 10px; }
.presetsearch .sm { color: #2d8ceb; }
.presetsearch input { flex: 1; }
.presetsearch button { width: 12px; }
.tree { height: 110px; display: grid; grid-auto-rows: 1fr; border-top: 1px solid #161616; margin-right: 15px; }
.tree li { display: flex; align-items: center; gap: 1px; padding-left: 5px; white-space: nowrap; }
.tree li.d1 { padding-left: 18px; } .tree li.d2 { padding-left: 32px; } .tree li.d3 { padding-left: 45px; }
.tree .ti { width: 12px; height: 10px; margin-right: 3px; color: #b4b4b4; }
.hid { visibility: hidden; }
.tree li.selected { background: #323232; }
.tree li.selected span { background: #a0a0a0; color: #222; padding: 0 5px 0 2px; margin-left: -2px; }
.sidefoot { margin-top: auto; border-top: 1px solid #161616; height: 17px; display: flex; justify-content: flex-end; padding-right: 20px; color: #b4b4b4; }

.timeline { border: 1px solid #2565ad; background: #232323; display: flex; flex-direction: column; height: 159px; }
.tltabs { display: flex; height: 20px; color: #8c8c8c; }
.tltab { display: flex; align-items: center; height: 20px; padding-top: 1px; white-space: nowrap; }
.t1 { gap: 10px; margin-left: 20px; }
.t2 { margin-left: 44px; }
.t3 { margin-left: 31px; gap: 8px; color: #c0c0c0; border-bottom: 2px solid #d0d0d0; width: 112px; padding-top: 3px; }
.t3 .i8 { margin-left: auto; }
.t3 .chip { margin-right: 1px; width: 8px; margin-left: 0; }
.t4 { margin-left: 29px; gap: 9px; }
.tlbody { flex: 1; display: grid; grid-template-columns: minmax(0, 721fr) minmax(0, 814fr); min-height: 0; }
.tlleft { min-width: 0; }
.tltop { height: 30px; display: flex; align-items: center; }
.clock { width: 86px; text-align: center; color: #20609f; line-height: 10px; }
.clock b { display: block; font: 700 12px/13px Lato, sans-serif; color: #2d8ceb; }
.clock span { display: block; font-size: 8px; }
.layersearch { flex: 1; height: 14px; background: #161616; display: flex; align-items: center; padding-left: 5px; color: #b4b4b4; }
.tlicons { width: 162px; display: flex; align-items: center; color: #b4b4b4; gap: 9px; padding-left: 12px; }
.tlicons .apart { margin-left: 5px; }
.tlicons .blue { color: #2d8ceb; }
.lrow { display: grid; grid-template-columns: 48px 28px 30px minmax(0, 1fr) 163px 109px; height: 14px; align-items: center; padding-left: 3px; }
.lrow > div { display: flex; align-items: center; height: 13px; }
.lhead { background: #2c2c2c; border-top: 1px solid #161616; height: 15px; font-size: 8px; }
.lhead svg { color: #b4b4b4; }
.av > * { width: 10px; height: 10px; margin: 0 1px; }
.box { background: #2b2b2b; }
.tagcol { gap: 4px; padding-left: 6px; }
.lhead .tagcol { padding-left: 14px; }
.lchip { width: 9px; height: 10px; }
.numcol { padding-left: 6px; }
.lhead .namecol { padding-left: 2px; }
.layer { background: #2b2b2b; color: #b4b4b4; border-bottom: 1px solid #232323; }
.layer .box { background: #242424; }
.layer.selected { background: #444; color: #c8c8c8; }
.layer.selected .box { background: #393939; }
.null { width: 11px; height: 11px; background: #fff; border: 1px solid #111; flex: none; }
.file { width: 8px; height: 11px; margin: 0 1px 0 2px; }
.namecol span { flex: 1; height: 13px; line-height: 13px; margin-left: 1px; padding-left: 3px; }
.selected .namecol span { background: #9c9c9c; color: #222; }
.switches { padding-left: 2px; }
.switches span { width: 12px; height: 12px; display: flex; align-items: center; justify-content: center; border: 1px solid transparent; background-clip: padding-box; }
.parent { padding-left: 5px; gap: 5px; }
.parent .dd { width: 71px; }
.lhead .parent { padding-left: 6px; }

.tlright { border-left: 1px solid #161616; display: flex; min-width: 0; }
.tracks { flex: 1; min-width: 0; position: relative; padding: 7px 0 0 4px; display: flex; flex-direction: column; }
.navbar { height: 7px; background: #5f5f5f; position: relative; }
.navbar::before, .navbar::after, .workarea::before, .workarea::after { content: ""; position: absolute; top: 0; bottom: 0; width: 5px; background: #2d8ceb; }
.navbar::before, .workarea::before { left: -5px; border-radius: 4px 0 0 4px; }
.navbar::after, .workarea::after { right: -4px; border-radius: 0 4px 4px 0; }
.ruler { height: 16px; display: flex; justify-content: space-between; color: #8c8c8c; }
.ruler li { width: 1px; display: flex; justify-content: center; align-items: flex-end; background: linear-gradient(#8c8c8c, #8c8c8c) bottom / 1px 4px no-repeat; }
.ruler span { line-height: 12px; margin-bottom: 4px; flex: none; }
.ruler li:first-child span { padding-left: 8px; }
.ruler li:last-child span { padding-right: 8px; }
.workarea { height: 12px; background: #5c5c5c; position: relative; margin-bottom: 4px; }
.track { height: 14px; background: #393939; border-bottom: 1px solid #262626; }
.track .clip { height: 13px; }
.track.one .clip { background: #559c57; border-top: 1px solid #6cae6e; }
.track.two .clip { width: 13%; background: #4b4b4b; border-radius: 3px 5px 0 0; }
.empty { flex: 1; background: #2f2f2f; }
.playhead { position: absolute; left: 71px; top: 7px; bottom: 0; width: 1px; background: #2d8ceb; display: flex; justify-content: center; padding-top: 11px; }
.playhead svg { width: 9px; height: 11px; }
.edge { width: 19px; display: flex; flex-direction: column; align-items: flex-end; gap: 4px; padding-top: 30px; color: #b4b4b4; }
.mk { width: 11px; height: 13px; }
.tlfoot { height: 15px; border-top: 1px solid #161616; display: grid; grid-template-columns: minmax(0, 721fr) minmax(0, 814fr); align-items: center; color: #a2a2a2; }
.footleft { display: flex; gap: 4px; padding-left: 4px; }
.toggle { width: 162px; margin-left: auto; margin-right: 108px; background: #1e1e1e; }
.footright { display: flex; align-items: center; gap: 7px; padding-left: 3px; color: #c0c0c0; }
.footright input { width: 42px; height: 10px; background: linear-gradient(#555, #555) center / 100% 1px no-repeat; }
.footright input::-webkit-slider-thumb { appearance: none; width: 8px; height: 8px; border: 1px solid #c0c0c0; border-radius: 50%; background: #232323; }
</style>
